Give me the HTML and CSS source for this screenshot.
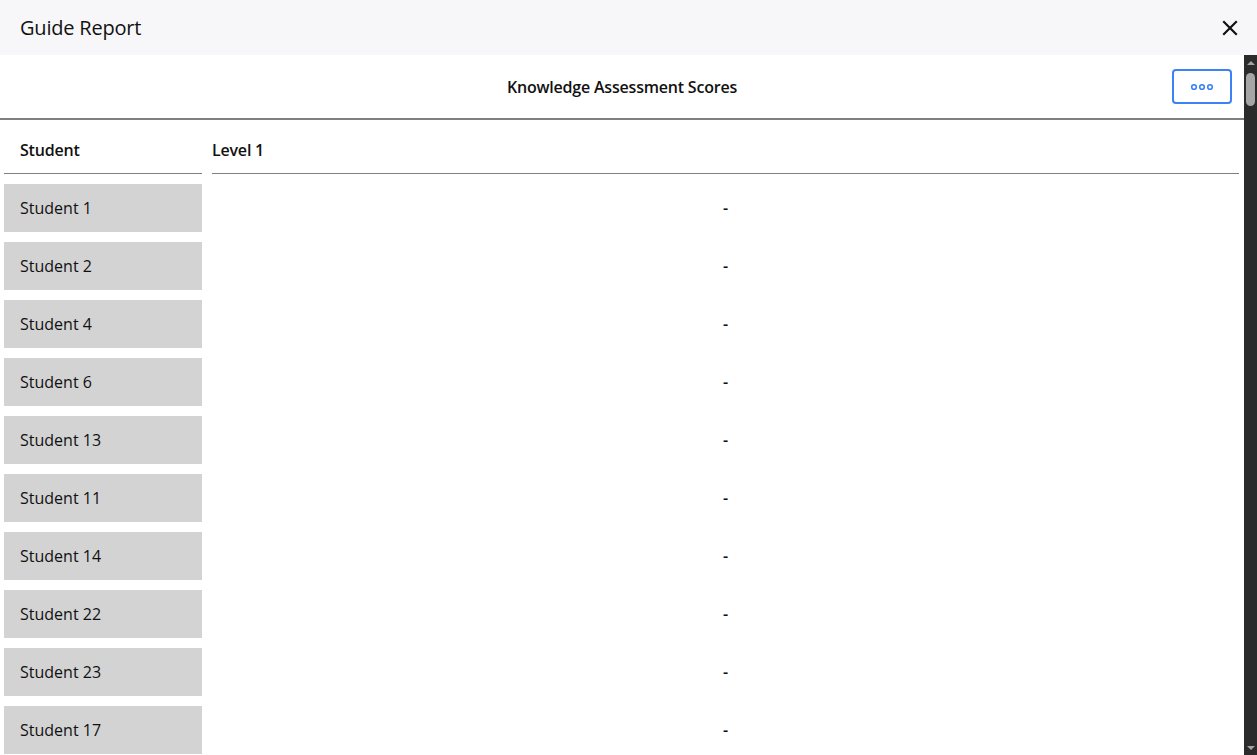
FILE: index.html
```html
<!DOCTYPE html>
<html>
<head>
<meta charset="utf-8">
<link rel="stylesheet" href="styles.css">
</head>
<body>
<div class="app">
  <header class="topbar">
    <div class="topbar-title">Guide Report</div>
    <button class="close-btn" aria-label="Close">
      <svg width="16" height="16" viewBox="0 0 16 16"><path d="M2 2 L14 14 M14 2 L2 14" stroke="#111" stroke-width="2.2" stroke-linecap="square" fill="none"/></svg>
    </button>
  </header>
  <div class="main">
    <div class="content">
      <div class="chart-head">
        <div class="chart-title">Knowledge Assessment Scores</div>
        <button class="more-btn" aria-label="More">
          <svg width="24" height="8" viewBox="0 0 24 8"><circle cx="4" cy="4" r="2.3" fill="none" stroke="#3b82f6" stroke-width="1.6"/><circle cx="12" cy="4" r="2.3" fill="none" stroke="#3b82f6" stroke-width="1.6"/><circle cx="20" cy="4" r="2.3" fill="none" stroke="#3b82f6" stroke-width="1.6"/></svg>
        </button>
      </div>
      <div class="table">
        <div class="th th-name">Student</div>
        <div class="th th-level">Level 1</div>

        <div class="td-name">Student 1</div><div class="td-score">-</div>
        <div class="td-name">Student 2</div><div class="td-score">-</div>
        <div class="td-name">Student 4</div><div class="td-score">-</div>
        <div class="td-name">Student 6</div><div class="td-score">-</div>
        <div class="td-name">Student 13</div><div class="td-score">-</div>
        <div class="td-name">Student 11</div><div class="td-score">-</div>
        <div class="td-name">Student 14</div><div class="td-score">-</div>
        <div class="td-name">Student 22</div><div class="td-score">-</div>
        <div class="td-name">Student 23</div><div class="td-score">-</div>
        <div class="td-name">Student 17</div><div class="td-score">-</div>
      </div>
    </div>
    <div class="scrollbar">
      <div class="sb-arrow sb-up"></div>
      <div class="sb-track">
        <div class="sb-thumb"></div>
      </div>
      <div class="sb-arrow sb-down"></div>
    </div>
  </div>
</div>
</body>
</html>
```

FILE: styles.css
```css
html, body {
  margin: 0;
  padding: 0;
  background: #ffffff;
}
body {
  font-family: "Open Sans", "Noto Sans", sans-serif;
  color: #111;
}
.app {
  width: 1257px;
  height: 755px;
  display: flex;
  flex-direction: column;
  overflow: hidden;
}
.topbar {
  height: 55px;
  flex: 0 0 55px;
  background: #f7f7f9;
  display: flex;
  align-items: center;
  justify-content: space-between;
  padding: 0 19px 0 20px;
  box-sizing: border-box;
}
.topbar-title {
  font-size: 20px;
  color: #111;
  letter-spacing: -0.2px;
}
.close-btn {
  border: none;
  background: transparent;
  padding: 0;
  width: 16px;
  height: 16px;
  display: flex;
  cursor: pointer;
}
.main {
  flex: 1;
  display: flex;
  min-height: 0;
}
.content {
  flex: 1;
  overflow: hidden;
}
.chart-head {
  height: 63px;
  border-bottom: 2px solid #808080;
  display: flex;
  align-items: center;
  justify-content: center;
  position: relative;
}
.chart-title {
  font-size: 16px;
  font-weight: 600;
  letter-spacing: -0.2px;
  color: #111;
}
.more-btn {
  position: absolute;
  right: 12px;
  top: 14px;
  width: 60px;
  height: 35px;
  border: 2px solid #3b82f6;
  border-radius: 4px;
  background: #fff;
  display: flex;
  align-items: center;
  justify-content: center;
  padding: 0;
  box-sizing: border-box;
}
.table {
  display: grid;
  grid-template-columns: 198px 1fr;
  column-gap: 10px;
  row-gap: 10px;
  padding: 0 5px 0 4px;
}
.th {
  font-size: 16px;
  font-weight: 600;
  letter-spacing: -0.2px;
  line-height: 22px;
  padding: 19px 0 12px 0;
  border-bottom: 1px solid #808080;
}
.th-name {
  padding-left: 16px;
}
.th-level {
  padding-left: 0;
}
.td-name {
  height: 48px;
  background: #d3d3d3;
  font-size: 16px;
  line-height: 48px;
  padding-left: 16px;
  color: #111;
}
.td-score {
  height: 48px;
  line-height: 48px;
  text-align: center;
  font-size: 16px;
  font-weight: 600;
}
.scrollbar {
  width: 13px;
  flex: 0 0 13px;
  background: #2b2b2b;
  display: flex;
  flex-direction: column;
  align-items: center;
}
.sb-arrow {
  flex: 0 0 15px;
  display: flex;
  align-items: center;
  justify-content: center;
}
.sb-up::before {
  content: "";
  border-left: 4px solid transparent;
  border-right: 4px solid transparent;
  border-bottom: 4px solid #a3a3a3;
}
.sb-down::before {
  content: "";
  border-left: 4px solid transparent;
  border-right: 4px solid transparent;
  border-top: 4px solid #a3a3a3;
}
.sb-track {
  flex: 1;
  width: 100%;
  display: flex;
  flex-direction: column;
  align-items: center;
  padding-top: 3px;
}
.sb-thumb {
  width: 9px;
  height: 33px;
  border-radius: 5px;
  background: #a6a6a6;
}
```
